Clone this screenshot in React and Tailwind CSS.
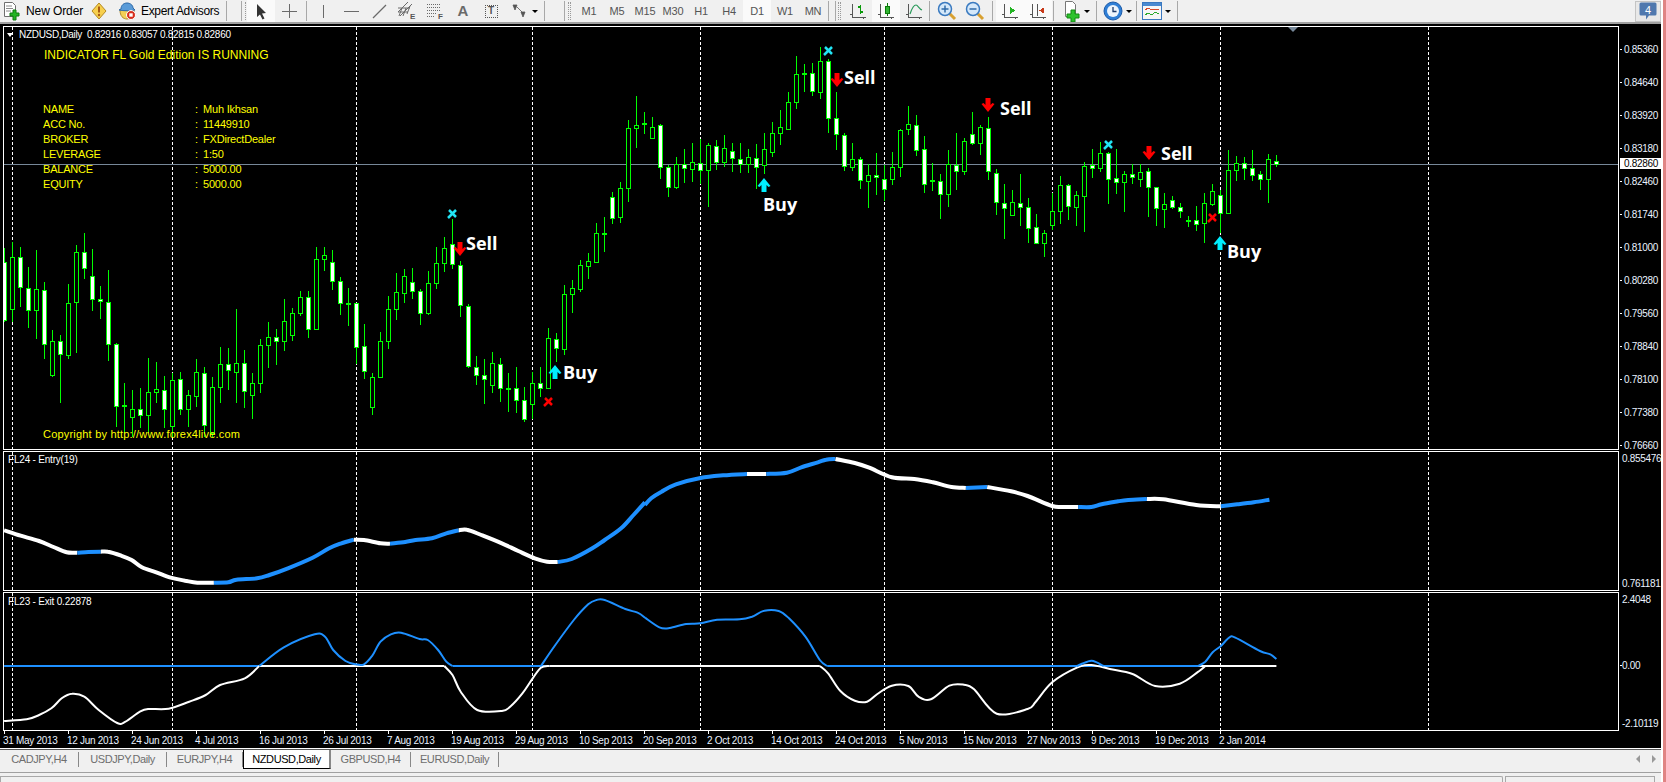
import React from 'react';

// [high, bodyTop, bodyBottom, low, kind] in page pixels. w = bear (white body), h = bull (hollow), d = doji
const CANDLES = [
  [248,262,320,322,'w'],[242,257,309,322,'h'],[247,257,287,307,'w'],[267,288,310,328,'w'],[250,289,310,339,'h'],
  [282,290,344,359,'w'],[330,341,375,377,'h'],[335,341,354,403,'w'],[284,303,355,359,'h'],[245,252,302,353,'h'],
  [233,252,268,279,'w'],[249,276,299,311,'w'],[286,299,301,319,'w'],[270,302,344,361,'w'],[343,344,406,427,'w'],
  [383,405,406,433,'d'],[390,409,417,437,'h'],[388,409,415,428,'w'],[358,392,415,433,'h'],[362,389,392,403,'h'],
  [376,390,409,428,'w'],[373,380,426,437,'h'],[372,379,409,415,'w'],[390,395,409,427,'h'],[359,372,396,407,'h'],
  [367,373,425,437,'w'],[377,387,433,437,'h'],[347,364,387,403,'h'],[348,364,370,390,'w'],[309,363,372,403,'h'],
  [350,363,391,408,'w'],[373,383,395,419,'h'],[339,345,383,393,'h'],[322,337,345,368,'h'],[329,337,341,365,'w'],
  [299,321,341,351,'h'],[308,313,335,341,'h'],[291,297,313,316,'h'],[291,297,329,338,'w'],[247,259,329,329,'h'],
  [247,255,259,271,'h'],[250,262,281,290,'w'],[277,281,303,315,'w'],[288,303,304,326,'d'],[303,303,347,364,'w'],
  [324,346,371,379,'w'],[373,377,407,415,'h'],[332,341,377,377,'h'],[296,309,341,349,'h'],[273,292,309,320,'h'],
  [269,276,293,303,'h'],[268,282,291,299,'w'],[289,291,313,325,'w'],[271,283,313,315,'h'],[247,263,283,289,'h'],
  [237,248,263,272,'h'],[219,244,264,269,'w'],[261,265,305,317,'w'],[304,306,366,368,'w'],[356,367,375,385,'w'],
  [359,375,379,404,'w'],[352,363,385,393,'h'],[358,364,388,402,'w'],[373,388,388,412,'d'],[367,388,400,413,'w'],
  [387,400,419,422,'w'],[372,383,404,419,'h'],[367,383,388,397,'w'],[328,338,388,388,'h'],[333,339,348,362,'w'],
  [285,294,349,355,'h'],[280,288,294,313,'h'],[260,265,289,292,'h'],[253,261,266,279,'h'],[223,233,262,262,'h'],
  [217,233,233,252,'d'],[192,197,218,224,'w'],[182,188,217,223,'h'],[120,128,188,202,'h'],[96,125,128,148,'h'],
  [112,123,124,134,'h'],[117,127,138,138,'h'],[124,125,167,179,'w'],[165,167,187,197,'w'],[157,164,187,189,'h'],
  [149,164,168,183,'w'],[143,162,169,182,'h'],[139,163,170,184,'w'],[143,145,170,207,'h'],[140,146,162,170,'w'],
  [135,148,162,167,'h'],[143,151,158,172,'w'],[143,159,164,173,'w'],[149,157,164,173,'h'],[144,158,167,189,'w'],
  [133,149,165,174,'h'],[122,133,152,157,'h'],[110,127,133,145,'h'],[92,102,129,129,'h'],[56,74,102,109,'h'],
  [64,73,74,92,'d'],[63,73,91,96,'w'],[47,61,92,99,'h'],[59,61,118,133,'w'],[92,118,134,150,'w'],
  [133,135,166,171,'w'],[143,159,167,171,'h'],[157,159,180,189,'w'],[164,175,181,208,'h'],[153,175,177,195,'w'],
  [165,179,189,201,'w'],[152,167,179,185,'h'],[129,130,167,177,'h'],[106,124,129,135,'h'],[115,125,150,156,'w'],
  [136,149,184,193,'w'],[163,180,181,191,'d'],[174,181,194,219,'w'],[150,164,194,207,'h'],[133,165,171,190,'w'],
  [138,141,171,175,'h'],[112,134,143,145,'w'],[125,127,143,155,'h'],[117,128,171,180,'w'],[169,173,202,215,'w'],
  [184,203,208,239,'w'],[190,202,215,216,'h'],[174,203,207,226,'w'],[198,207,228,243,'w'],[214,227,243,244,'w'],
  [230,233,243,257,'h'],[193,211,225,230,'h'],[176,185,211,224,'h'],[184,185,206,220,'w'],[191,195,207,226,'h'],
  [162,166,196,232,'h'],[149,165,168,178,'w'],[142,153,168,172,'h'],[152,153,179,204,'w'],[149,178,182,194,'w'],
  [171,174,182,212,'h'],[164,174,177,184,'w'],[164,172,179,187,'h'],[168,171,187,217,'w'],[187,187,208,226,'w'],
  [193,204,209,228,'h'],[196,200,207,209,'w'],[203,207,211,218,'w'],[216,220,221,227,'d'],[206,220,224,231,'w'],
  [193,203,223,243,'h'],[184,191,204,206,'h'],[190,195,213,233,'w'],[150,170,213,214,'h'],[156,163,170,181,'h'],
  [157,163,168,180,'w'],[150,168,175,181,'w'],[171,174,179,190,'w'],[154,159,179,203,'h'],[155,161,164,167,'w'],
];

const GRID_X = [12.5, 172.5, 356.5, 532.5, 700.5, 884.5, 1052.5, 1220.5, 1428.5];
const PRICES = ['0.85360','0.84640','0.83920','0.83180','0.82460','0.81740','0.81000','0.80280','0.79560','0.78840','0.78100','0.77380','0.76660'];
const DATES = ['31 May 2013','12 Jun 2013','24 Jun 2013','4 Jul 2013','16 Jul 2013','26 Jul 2013','7 Aug 2013','19 Aug 2013','29 Aug 2013','10 Sep 2013','20 Sep 2013','2 Oct 2013','14 Oct 2013','24 Oct 2013','5 Nov 2013','15 Nov 2013','27 Nov 2013','9 Dec 2013','19 Dec 2013','2 Jan 2014'];
const TIMEFRAMES = ['M1','M5','M15','M30','H1','H4','D1','W1','MN'];
const TABS = [
  { name: 'CADJPY,H4', w: 'w-[79px]' },
  { name: 'USDJPY,Daily', w: 'w-[88px]' },
  { name: 'EURJPY,H4', w: 'w-[76px]' },
  { name: 'NZDUSD,Daily', w: 'w-[88px]', active: true },
  { name: 'GBPUSD,H4', w: 'w-[80px]' },
  { name: 'EURUSD,Daily', w: 'w-[88px]' },
];
const INFO = [
  ['NAME', 'Muh Ikhsan'],
  ['ACC No.', '11449910'],
  ['BROKER', 'FXDirectDealer'],
  ['LEVERAGE', '1:50'],
  ['BALANCE', '5000.00'],
  ['EQUITY', '5000.00'],
];

// smooth path through the traced points (catmull-rom)
const smooth = (p) => {
  let d = `M${p[0][0].toFixed(1)} ${p[0][1].toFixed(1)}`;
  for (let i = 0; i < p.length - 1; i++) {
    const a = p[i - 1] || p[i];
    const b = p[i];
    const c = p[i + 1];
    const e = p[i + 2] || c;
    const c1x = b[0] + (c[0] - a[0]) / 6;
    const c1y = b[1] + (c[1] - a[1]) / 6;
    const c2x = c[0] - (e[0] - b[0]) / 6;
    const c2y = c[1] - (e[1] - b[1]) / 6;
    d += `C${c1x.toFixed(1)} ${c1y.toFixed(1)} ${c2x.toFixed(1)} ${c2y.toFixed(1)} ${c[0].toFixed(1)} ${c[1].toFixed(1)}`;
  }
  return d;
};

// indicator traces, taken from two crops: left half starts at x=0, right half at x=645
const pl = (pts) => smooth(pts.map(([x, y]) => [x / 2.431, 445 + y / 3]));
const pr = (pts) => smooth(pts.map(([x, y]) => [645 + x / 2.431, 445 + y / 3]));

const BLUE = '#1e90ff';
const ENTRY = [
  ['#fff', pl([[10,256],[50,272],[95,288],[130,306],[162,322],[188,323]])],
  [BLUE, pl([[188,323],[215,321],[245,320]])],
  ['#fff', pl([[245,320],[262,320],[295,332],[320,345],[345,367],[380,382],[415,398],[450,407],[480,413],[520,413]])],
  [BLUE, pl([[520,413],[555,412],[575,404],[625,400],[655,390],[700,370],[760,338],[800,310],[830,295],[860,284]])],
  ['#fff', pl([[860,284],[885,285],[925,295],[948,296]])],
  [BLUE, pl([[948,296],[985,291],[1010,285],[1050,280],[1085,265],[1115,256]])],
  ['#fff', pl([[1115,256],[1135,254],[1170,270],[1220,295],[1260,318],[1300,340],[1330,350],[1356,351]])],
  [BLUE, pl([[1356,351],[1390,342],[1440,310],[1470,285],[1510,250],[1540,210],[1568,172]])],
  [BLUE, pr([[0,180],[15,160],[40,140],[75,118],[135,99],[190,91],[248,87]])],
  ['#fff', pr([[248,87],[295,87]])],
  [BLUE, pr([[295,87],[345,83],[380,67],[420,52],[440,44],[463,42]])],
  ['#fff', pr([[463,42],[510,54],[545,68],[600,97],[655,102],[700,112],[745,126],[780,129]])],
  [BLUE, pr([[780,129],[832,126]])],
  ['#fff', pr([[832,126],[890,139],[930,153],[990,183],[1015,186],[1053,186]])],
  [BLUE, pr([[1053,186],[1085,186],[1110,178],[1150,169],[1175,165],[1220,162]])],
  ['#fff', pr([[1220,162],[1260,163],[1340,180],[1400,184]])],
  [BLUE, pr([[1400,184],[1440,178],[1480,172],[1518,164]])],
];
const EXIT = [
  ['#fff', pl([[630,663],[1080,663]])],
  ['#fff', pl([[1335,663],[1568,663]])],
  ['#fff', pr([[0,663],[425,663]])],
  ['#fff', pr([[1345,663],[1535,663]])],
  [BLUE, pl([[10,663],[630,663]])],
  [BLUE, pl([[1100,663],[1335,663]])],
  [BLUE, pr([[443,663],[1345,663]])],
  ['#fff', pl([[10,828],[65,823],[95,810],[125,790],[150,760],[175,746],[205,755],[240,795],[285,834],[305,830],[340,800],[360,792],[410,791],[460,770],[500,750],[535,720],[595,700],[630,663]])],
  [BLUE, pl([[630,663],[690,607],[765,568],[790,575],[810,615],[840,648],[865,658],[885,658],[905,632],[925,590],[950,568],[975,563],[1020,582],[1040,585],[1065,615],[1085,650],[1100,663]])],
  ['#fff', pl([[1080,663],[1100,690],[1120,740],[1160,795],[1220,798],[1240,785],[1270,745],[1295,700],[1315,668],[1335,663]])],
  [BLUE, pl([[1315,663],[1350,600],[1395,525],[1430,478],[1450,465],[1470,465],[1520,492],[1550,503],[1568,518]])],
  [BLUE, pr([[0,518],[35,547],[60,549],[100,537],[135,535],[175,524],[230,523],[260,515],[290,497],[325,498],[350,520],[390,575],[425,645],[443,663]])],
  ['#fff', pr([[425,663],[445,685],[475,738],[510,767],[540,770],[565,747],[600,722],[640,723],[665,755],[695,763],[740,722],[775,719],[800,733],[855,806],[930,792],[950,770],[990,712],[1050,668],[1085,660],[1130,672],[1185,687],[1240,723],[1300,716],[1345,680],[1362,663]])],
  [BLUE, pr([[1050,663],[1075,650],[1090,648],[1115,663]])],
  [BLUE, pr([[1345,663],[1362,650],[1380,622],[1400,603],[1420,578],[1435,578],[1495,618],[1520,628],[1535,642]])],
];

const GridLines = ({ y1, y2 }) => (
  <g shapeRendering="crispEdges">
    {GRID_X.map((x) => (
      <line key={x} x1={x} x2={x} y1={y1} y2={y2} stroke="#fff" strokeDasharray="3 2" />
    ))}
  </g>
);

const Candle = ({ c, i }) => {
  const x = 4 + 8 * i + 0.5;
  const [high, top, bottom, low, kind] = c;
  return (
    <g shapeRendering="crispEdges">
      <line x1={x} x2={x} y1={high} y2={low} stroke="#00ff00" />
      {kind === 'd' ? (
        <line x1={x - 2.5} x2={x + 2.5} y1={top + 0.5} y2={top + 0.5} stroke="#00ff00" strokeWidth="2" />
      ) : (
        <rect x={x - 2} y={top + 0.5} width="4" height={bottom - top} fill={kind === 'w' ? '#fff' : '#000'} stroke="#00ff00" />
      )}
    </g>
  );
};

const UpArrow = ({ x, y }) => (
  <polygon
    fill="#00eeff"
    points={`${x},${y} ${x + 6.5},${y + 8} ${x + 4.5},${y + 9} ${x + 2.5},${y + 7} ${x + 2.5},${y + 14} ${x - 2.5},${y + 14} ${x - 2.5},${y + 7} ${x - 4.5},${y + 9} ${x - 6.5},${y + 8}`}
  />
);

const DownArrow = ({ x, y }) => (
  <polygon
    fill="#ff0000"
    points={`${x},${y + 14} ${x + 6.5},${y + 6} ${x + 4.5},${y + 5} ${x + 2.5},${y + 7} ${x + 2.5},${y} ${x - 2.5},${y} ${x - 2.5},${y + 7} ${x - 4.5},${y + 5} ${x - 6.5},${y + 6}`}
  />
);

const Cross = ({ x, y, color }) => (
  <g stroke={color} strokeWidth="2.5">
    <line x1={x - 3} x2={x + 4} y1={y - 4} y2={y + 3} />
    <line x1={x + 4} x2={x - 4} y1={y - 4} y2={y + 4} />
  </g>
);

const Signal = ({ x, y, children }) => (
  <text x={x} y={y} fill="#fff" className="font-['Open_Sans',sans-serif] text-[18px] font-bold">{children}</text>
);

const MainChart = () => (
  <svg width="1614" height="422" viewBox="4 27 1614 422" className="block">
    <GridLines y1={27} y2={449} />
    <line x1="4" x2="1618" y1="164.5" y2="164.5" stroke="#778899" shapeRendering="crispEdges" />
    <polygon points="1288,27 1298,27 1293,32" fill="#778899" />
    {CANDLES.map((c, i) => <Candle key={i} c={c} i={i} />)}

    <DownArrow x={460} y={242} />
    <Signal x={466} y={250}>Sell</Signal>
    <Cross x={452} y={214} color="#22e4f4" />
    <Cross x={548} y={402} color="#ff0000" />
    <UpArrow x={555} y={365} />
    <Signal x={563} y={379}>Buy</Signal>
    <UpArrow x={764} y={178} />
    <Signal x={763} y={211}>Buy</Signal>
    <Cross x={828} y={51} color="#22e4f4" />
    <DownArrow x={837} y={73} />
    <Signal x={844} y={84}>Sell</Signal>
    <DownArrow x={988} y={98} />
    <Signal x={1000} y={115}>Sell</Signal>
    <Cross x={1108} y={145} color="#22e4f4" />
    <DownArrow x={1149} y={146} />
    <Signal x={1161} y={160}>Sell</Signal>
    <Cross x={1212} y={218} color="#ff0000" />
    <UpArrow x={1220} y={236} />
    <Signal x={1227} y={258}>Buy</Signal>
  </svg>
);

const IndicatorChart = ({ lines, width, y, h }) => (
  <svg width="1614" height={h} viewBox={`4 ${y} 1614 ${h}`} className="block">
    <GridLines y1={y} y2={y + h} />
    {lines.map(([color, d], i) => (
      <path key={i} d={d} fill="none" stroke={color} strokeWidth={width} />
    ))}
  </svg>
);

const InfoPanel = () => (
  <>
    <div className="absolute left-[15px] top-[1px] flex items-center text-[10px] leading-[14px] tracking-[-0.3px] text-white">
      <span className="mr-[4px] w-0 h-0 -ml-[12px] border-x-[3px] border-t-[4px] border-x-transparent border-t-white" />
      <span className="ml-[2px] whitespace-pre">NZDUSD,Daily  0.82916 0.83057 0.82815 0.82860</span>
    </div>
    <div className="absolute left-[40px] top-[21px] text-[12px] leading-[15px] text-[#ffff00] whitespace-nowrap">INDICATOR FL Gold Edition IS RUNNING</div>
    <div className="absolute left-[39px] top-[75px] grid grid-cols-[152px_8px_auto] text-[11px] leading-[15px] tracking-[-0.2px] text-[#ffff00] whitespace-nowrap">
      {INFO.map(([label, value]) => (
        <React.Fragment key={label}>
          <span>{label}</span>
          <span>:</span>
          <span>{value}</span>
        </React.Fragment>
      ))}
    </div>
    <div className="absolute left-[39px] top-[400px] text-[11px] leading-[14px] tracking-[0.2px] text-[#ffff00] whitespace-nowrap">Copyright by http://www.forex4live.com</div>
  </>
);

const AxisRow = ({ children, className = '' }) => (
  <div className={`flex items-center text-[10px] leading-[13px] tracking-[-0.3px] text-[#eaf3ff] ${className}`}>
    <span className="w-[2px] h-px ml-px bg-white" />
    {children}
  </div>
);

const PriceAxis = () => (
  <div className="relative w-[42px] pt-[7px]">
    {PRICES.map((p) => (
      <AxisRow key={p} className="h-[33px]"><span className="ml-[2px]">{p}</span></AxisRow>
    ))}
    <div className="absolute left-[1px] top-[132px] w-[41px] h-[11px] bg-white flex items-center pl-[4px] text-[10px] tracking-[-0.3px] text-black">0.82860</div>
  </div>
);

const ChartWindow = () => (
  <div className="h-[724px] bg-black pt-[2px] flex flex-col text-white">
    <div className="flex h-[424px] ml-[3px]">
      <div className="relative w-[1616px] border border-white">
        <MainChart />
        <InfoPanel />
      </div>
      <PriceAxis />
    </div>
    <div className="flex h-[140px] ml-[3px] mt-px">
      <div className="relative w-[1616px] border border-white">
        <IndicatorChart lines={ENTRY} width={4} y={452} h={138} />
        <div className="absolute left-[4px] top-[1px] text-[10px] leading-[14px] tracking-[-0.2px]">FL24 - Entry(19)</div>
      </div>
      <div className="w-[42px] flex flex-col justify-between pl-[3px] pt-px pb-px text-[10px] leading-[13px] tracking-[-0.3px] text-[#eaf3ff]">
        <span>0.855476</span>
        <span>0.761181</span>
      </div>
    </div>
    <div className="flex h-[139px] ml-[3px] mt-px">
      <div className="relative w-[1616px] border border-white">
        <IndicatorChart lines={EXIT} width={2} y={593} h={137} />
        <div className="absolute left-[4px] top-[2px] text-[10px] leading-[14px] tracking-[-0.2px]">FL23 - Exit 0.22878</div>
      </div>
      <div className="w-[42px] flex flex-col pt-px">
        <div className="pl-[3px] text-[10px] leading-[13px] tracking-[-0.3px] text-[#eaf3ff]">2.4048</div>
        <AxisRow className="mt-[53px]"><span>0.00</span></AxisRow>
        <div className="pl-[3px] mt-[45px] text-[10px] leading-[13px] tracking-[-0.3px] text-[#eaf3ff]">-2.10119</div>
      </div>
    </div>
    <div className="flex h-[17px] pl-[4px]">
      {DATES.map((d) => (
        <div key={d} className="w-[64px] shrink-0 text-[10px] leading-[13px] tracking-[-0.3px] text-[#eaf3ff] whitespace-nowrap">
          <div className="w-px h-[3px] bg-white" />
          <div className="-ml-px">{d}</div>
        </div>
      ))}
    </div>
  </div>
);

const Sep = ({ className = '' }) => <div className={`w-px h-[20px] bg-[#a8a8a8] shrink-0 ${className}`} />;

const Grip = ({ className = '' }) => (
  <div className={`w-[3px] h-[18px] shrink-0 border-x border-dotted border-[#999] ${className}`} />
);

const Cell = ({ active, children, className = 'w-[28px]' }) => (
  <div className={`h-[22px] shrink-0 flex items-center justify-center ${active ? 'bg-[#fafafa]' : ''} ${className}`}>{children}</div>
);

const Drop = ({ className = '' }) => (
  <span className={`w-0 h-0 shrink-0 border-x-[3px] border-t-[3px] border-x-transparent border-t-black ${className}`} />
);

const NewOrderIcon = () => (
  <svg width="18" height="20" viewBox="0 0 18 20">
    <path d="M1.5 1.5h8l3 3v11h-11z" fill="#fff" stroke="#6e6e6e" />
    <path d="M3 5h6M3 7.5h7M3 10h5" stroke="#8a8a8a" />
    <path d="M10 9h3v3h3v3h-3v4h-3v-4H7v-3h3z" fill="#22b322" stroke="#0c7a0c" />
  </svg>
);

const WarningIcon = () => (
  <svg width="16" height="18" viewBox="0 0 16 18">
    <path d="M8 1l7 8-7 8-7-8z" fill="#f7cf4d" stroke="#b58a22" strokeLinejoin="round" />
    <path d="M8 4.5v6" stroke="#a85a12" strokeWidth="2" />
    <circle cx="8" cy="13" r="1.2" fill="#a85a12" />
  </svg>
);

const ExpertIcon = () => (
  <svg width="18" height="20" viewBox="0 0 18 20">
    <path d="M2 9c0 6 3 9 7 9s7-3 7-9z" fill="#f3cf55" stroke="#b28a2a" />
    <path d="M3 8c0-4 3-6 6-6s6 2 6 5l2 2c-5 1-11 1-16 0z" fill="#5a9bd8" stroke="#2e6aa8" />
    <circle cx="13" cy="14" r="4.5" fill="#d8301e" stroke="#fff" />
    <rect x="11.3" y="12.3" width="3.4" height="3.4" fill="#fff" />
  </svg>
);

const ToolIcon = ({ children, w = 18, h = 18 }) => (
  <svg width={w} height={h} viewBox={`0 0 ${w} ${h}`} shapeRendering="crispEdges">{children}</svg>
);

const GREY = '#6a6a6a';

const ChartAxes = () => <path d="M3.5 2v13.5H17M1 12h2M14 15v2" stroke="#555" fill="none" />;

const Toolbar = () => (
  <div className="h-[24px] border-b-2 border-[#a0a0a0] bg-[#f0f0f0] flex items-center text-[12px] text-black">
    <div className="w-[88px] flex items-center pl-[3px] shrink-0">
      <NewOrderIcon />
      <span className="ml-[5px] tracking-[-0.1px]">New Order</span>
    </div>
    <Cell className="w-[22px]"><WarningIcon /></Cell>
    <div className="w-[116px] flex items-center pl-[8px] shrink-0">
      <ExpertIcon />
      <span className="ml-[5px] tracking-[-0.35px] whitespace-nowrap">Expert Advisors</span>
    </div>
    <Sep />
    <Sep className="ml-[14px]" />
    <Grip className="ml-[3px]" />
    <Cell active className="w-[28px] -ml-px">
      <ToolIcon>
        <path d="M5 2l9 9-4 .5 2.5 5-2 1-2.5-5L5 15z" fill="#333" shapeRendering="auto" />
      </ToolIcon>
    </Cell>
    <Cell>
      <ToolIcon><path d="M9.5 2v14M2 9.5h15" stroke={GREY} /></ToolIcon>
    </Cell>
    <Sep className="ml-[3px]" />
    <div className="w-[2px] shrink-0" />
    <Cell><ToolIcon><path d="M9.5 3v13" stroke={GREY} strokeWidth="1.5" /></ToolIcon></Cell>
    <Cell><ToolIcon><path d="M2 9.5h15" stroke={GREY} strokeWidth="1.5" /></ToolIcon></Cell>
    <Cell><ToolIcon><path d="M3 16L16 3" stroke={GREY} strokeWidth="1.2" shapeRendering="auto" /></ToolIcon></Cell>
    <Cell>
      <svg width="20" height="20" viewBox="0 0 20 20">
        <path d="M1 11L11 1M3 15L15 3M1 7h12M1 11h10M2 15l3-8M6 15l3-8M10 13l3-8" stroke={GREY} fill="none" />
        <text x="13" y="18" fontSize="8" fontWeight="bold" fill="#555">E</text>
      </svg>
    </Cell>
    <Cell>
      <svg width="20" height="20" viewBox="0 0 20 20">
        <path d="M2 3.5h14M2 6.5h14M2 9.5h14M2 12.5h10M2 15.5h8" stroke={GREY} strokeDasharray="1 1" />
        <text x="13" y="18" fontSize="8" fontWeight="bold" fill="#555">F</text>
      </svg>
    </Cell>
    <Cell><span className="text-[15px] font-bold leading-[18px] text-[#6a6a6a]">A</span></Cell>
    <Cell>
      <div className="w-[13px] h-[13px] border border-dotted border-[#555] flex items-center justify-center text-[10px] font-bold leading-none text-[#555]">T</div>
    </Cell>
    <Cell>
      <svg width="14" height="16" viewBox="0 0 14 16">
        <path d="M1 2l4 0-2 5zM9 9l4 0-2 5zM5 4l5 5" fill="#555" stroke="#555" strokeWidth="0.8" />
      </svg>
    </Cell>
    <Drop className="ml-[-1px]" />
    <Sep className="ml-[6px]" />
    <Sep className="ml-[19px]" />
    <Grip className="ml-[3px]" />
    <div className="w-[4px] shrink-0" />
    {TIMEFRAMES.map((t) => (
      <Cell key={t} active={t === 'D1'}>
        <span className="text-[11px] tracking-[-0.2px] text-[#555]">{t}</span>
      </Cell>
    ))}
    <Sep className="ml-px" />
    <Sep className="ml-[6px]" />
    <Grip className="ml-[2px]" />
    <div className="w-[3px] shrink-0" />
    <Cell>
      <ToolIcon>
        <ChartAxes />
        <path d="M11.5 3v9M9 5h2.5M11.5 10H14" stroke="#0a9a0a" strokeWidth="1.5" />
      </ToolIcon>
    </Cell>
    <Cell active>
      <ToolIcon>
        <ChartAxes />
        <rect x="8.5" y="4.5" width="4" height="7" fill="#33b533" stroke="#0a7a0a" />
        <path d="M10.5 1v3M10.5 12v2" stroke="#0a7a0a" />
      </ToolIcon>
    </Cell>
    <Cell>
      <ToolIcon>
        <ChartAxes />
        <path d="M5 12c2-6 4-9 6-9s3 4 6 5" stroke="#2a9a5a" fill="none" strokeWidth="1.2" shapeRendering="auto" />
      </ToolIcon>
    </Cell>
    <Sep className="ml-px" />
    <div className="w-[3px] shrink-0" />
    <Cell>
      <svg width="20" height="20" viewBox="0 0 20 20">
        <path d="M12 12l6 6" stroke="#d8a030" strokeWidth="3" />
        <circle cx="8" cy="8" r="6.5" fill="#d4e8fa" stroke="#3a7ac0" strokeWidth="1.5" />
        <path d="M4.5 8h7M8 4.5v7" stroke="#2e6aa8" strokeWidth="1.5" />
      </svg>
    </Cell>
    <Cell>
      <svg width="20" height="20" viewBox="0 0 20 20">
        <path d="M12 12l6 6" stroke="#d8a030" strokeWidth="3" />
        <circle cx="8" cy="8" r="6.5" fill="#d4e8fa" stroke="#3a7ac0" strokeWidth="1.5" />
        <path d="M4.5 8h7" stroke="#2e6aa8" strokeWidth="1.5" />
      </svg>
    </Cell>
    <Sep className="ml-[3px]" />
    <div className="w-[3px] shrink-0" />
    <Cell active>
      <ToolIcon>
        <ChartAxes />
        <path d="M9 5v7l5-3.5z" fill="#22b322" />
      </ToolIcon>
    </Cell>
    <Cell active>
      <ToolIcon>
        <ChartAxes />
        <path d="M8.5 2v12" stroke="#555" />
        <path d="M15 5.5v6L10 8.5z" fill="#c83a1a" />
      </ToolIcon>
    </Cell>
    <Sep className="ml-px" />
    <div className="w-[8px] shrink-0" />
    <svg width="20" height="22" viewBox="0 0 20 22" className="shrink-0">
      <path d="M3.5 1.5h7l3 3v12h-10z" fill="#fff" stroke="#777" />
      <path d="M9 10h4v4h4v4h-4v4H9v-4H5v-4h4z" fill="#2cc22c" stroke="#128a12" />
    </svg>
    <Drop className="ml-[2px]" />
    <Sep className="ml-[6px]" />
    <div className="w-[6px] shrink-0" />
    <svg width="20" height="20" viewBox="0 0 20 20" className="shrink-0">
      <circle cx="10" cy="10" r="9" fill="#2f7fd6" stroke="#1c5aa8" />
      <circle cx="10" cy="10" r="6" fill="#eef5fc" />
      <path d="M10 6v4.5h3.5" stroke="#1c3a6a" fill="none" strokeWidth="1.3" />
    </svg>
    <Drop className="ml-[3px]" />
    <Sep className="ml-[4px]" />
    <div className="w-[5px] shrink-0" />
    <svg width="20" height="18" viewBox="0 0 20 18" className="shrink-0" shapeRendering="crispEdges">
      <rect x="0.5" y="0.5" width="19" height="17" fill="#f6f6f6" stroke="#3a78c0" />
      <rect x="1" y="1" width="18" height="3" fill="#4a8ad0" />
      <path d="M3 8l3-2 4 2 3-1 4 1" stroke="#d84a2a" fill="none" />
      <path d="M3 13l3-2 4 2 3-3 4 2" stroke="#2aa82a" fill="none" />
    </svg>
    <Drop className="ml-[3px]" />
    <Sep className="ml-[6px]" />
    <div className="ml-auto w-[26px] h-[21px] border border-[#c4c4c4] bg-[#e8e8e8] flex items-center justify-center shrink-0">
      <svg width="18" height="18" viewBox="0 0 18 18">
        <path d="M2 0.5h14a1.5 1.5 0 011.5 1.5v10a1.5 1.5 0 01-1.5 1.5H10L7 17.5v-4H2A1.5 1.5 0 01.5 12V2A1.5 1.5 0 012 .5z" fill="#4f78ae" />
        <text x="9" y="11.5" textAnchor="middle" fontSize="11" fill="#fff">4</text>
      </svg>
    </div>
  </div>
);

const TabBar = () => (
  <div className="flex h-[22px] bg-[#f0f0f0] border-t border-[#555] text-[11px] tracking-[-0.4px]">
    <div className="flex h-[19px] w-[1630px] shrink-0">
      {TABS.map((t) => (
        <div
          key={t.name}
          className={`${t.w} shrink-0 flex items-center justify-center ${
            t.active
              ? 'bg-white text-black border-l border-b border-black border-r-2 border-r-[#888]'
              : 'text-[#6e6e6e] border-r border-[#888] my-[2px]'
          }`}
        >
          {t.name}
        </div>
      ))}
    </div>
    <div className="flex items-center h-[19px]">
      <span className="w-0 h-0 ml-[6px] border-y-[4px] border-r-[4px] border-y-transparent border-r-[#999]" />
      <span className="w-0 h-0 ml-[12px] border-y-[4px] border-l-[4px] border-y-transparent border-l-[#999]" />
    </div>
  </div>
);

const StatusBar = () => (
  <div className="flex-1 bg-[#f0f0f0]">
    <div className="h-[3px]" />
    <div className="h-px bg-[#a0a0a0]" />
    <div className="flex h-[6px] mt-[3px]">
      <div className="w-[1503px] h-full border border-b-0 border-[#a8a8a8] rounded-tr-[2px]" />
      <div className="w-[150px] h-full ml-[2px] border border-b-0 border-[#a8a8a8]" />
    </div>
  </div>
);

export default function App() {
  return (
    <div className="w-[1666px] h-[782px] overflow-hidden flex bg-white font-['Liberation_Sans',sans-serif]">
      <div className="w-[1661px] shrink-0 flex flex-col">
        <Toolbar />
        <ChartWindow />
        <div className="h-px bg-white" />
        <TabBar />
        <StatusBar />
      </div>
      <div className="w-[2px] bg-white shrink-0" />
      <div className="flex-1 bg-[#e08484]" />
    </div>
  );
}
